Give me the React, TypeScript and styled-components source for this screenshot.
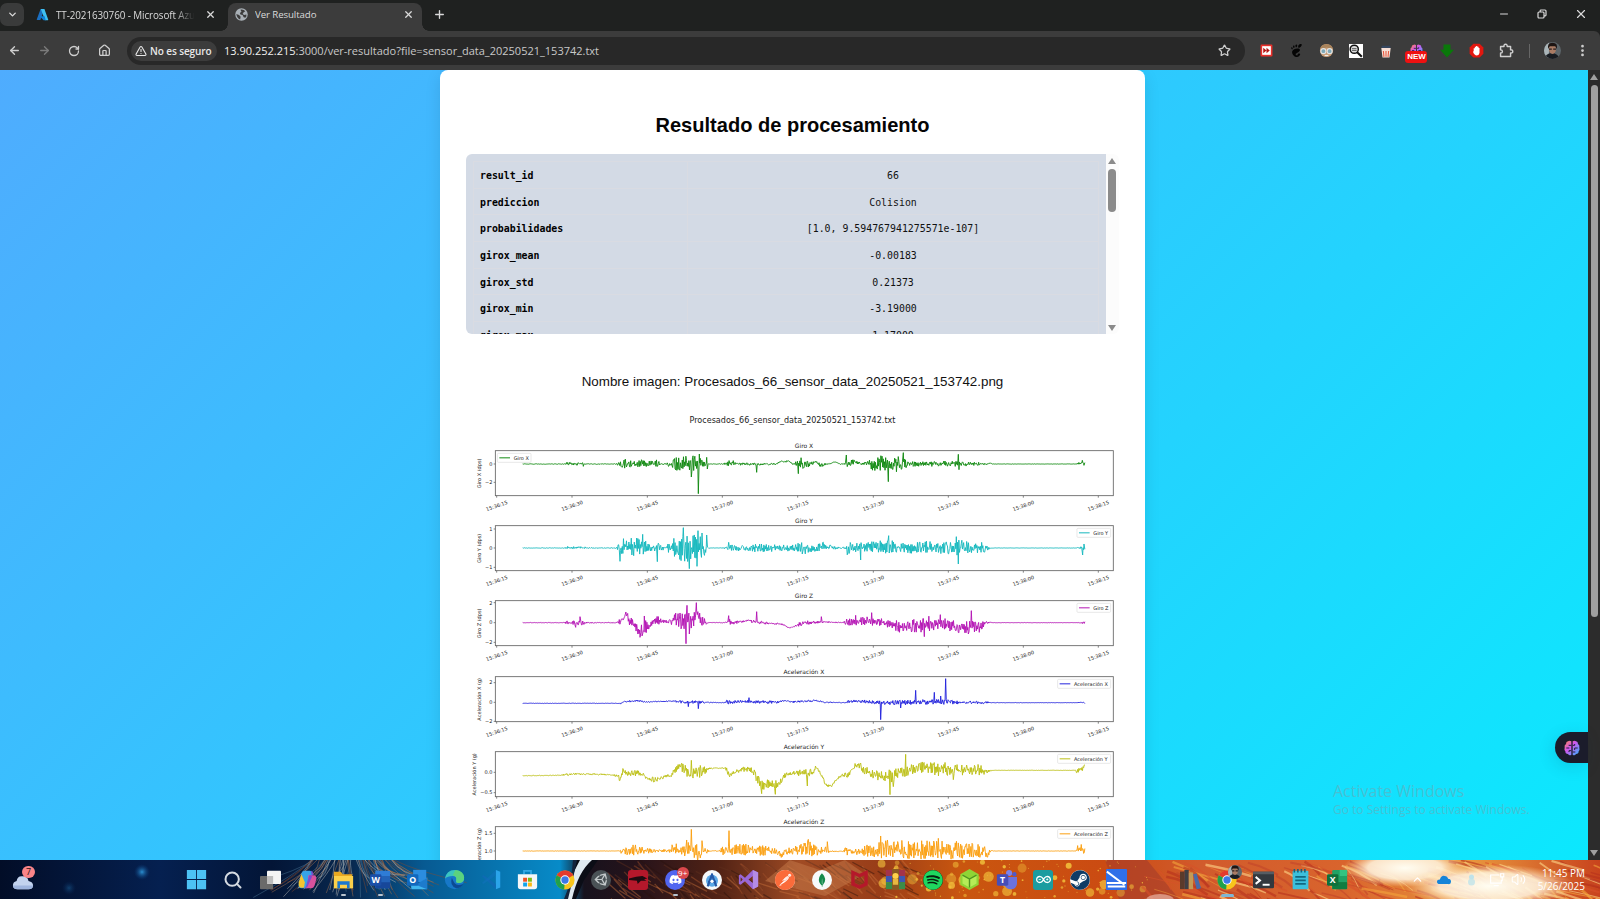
import React from 'react';
import styled, { createGlobalStyle, css } from 'styled-components';
import {
  ArrowLeft, ArrowRight, RotateCw, House, Star, X, Plus, ChevronDown, ChevronUp,
  TriangleAlert, Minus, EllipsisVertical, Volume2, Search,
} from 'lucide-react';
import { FaDiscord, FaSpotify, FaSteam, FaUnity } from 'react-icons/fa';
import { SiPostman, SiMongodb, SiArduino, SiMcafee, SiGnome } from 'react-icons/si';

const ui = `'Open Sans', 'Noto Sans', sans-serif`;
const arial = `'Liberation Sans', Arial, sans-serif`;
const mono = `'DejaVu Sans Mono', monospace`;

const GlobalStyle = createGlobalStyle`
  * { box-sizing: border-box; }
  html, body { margin: 0; padding: 0; overflow: hidden; background: #1f2020; }
`;

const Screen = styled.div`
  width: 1600px;
  height: 899px;
  display: flex;
  flex-direction: column;
  overflow: hidden;
  position: relative;
  font-family: ${ui};
`;

/* ---------- browser chrome ---------- */

const TabStrip = styled.div`
  height: 31px;
  flex: none;
  display: flex;
  align-items: flex-start;
  background: #1f2120;
  color: #dadada;
`;

const TabSearch = styled.div`
  width: 24px;
  height: 23px;
  margin-top: 3px;
  border-radius: 7px;
  background: #3a3b3b;
  display: flex;
  align-items: center;
  justify-content: center;
`;

const Tab = styled.div<{ $active?: boolean }>`
  position: relative;
  width: ${(p) => (p.$active ? 194 : 200)}px;
  height: 28px;
  margin: 3px 0 0 ${(p) => (p.$active ? 4 : 0)}px;
  padding: 0 8px 5px ${(p) => (p.$active ? 7 : 12)}px;
  display: flex;
  align-items: center;
  gap: 7px;
  border-radius: 8px 8px 0 0;
  ${(p) =>
    p.$active &&
    css`
      background: #3c3c3c;
      &::before,
      &::after {
        content: '';
        position: absolute;
        bottom: 0;
        width: 7px;
        height: 7px;
      }
      &::before {
        left: -7px;
        background: radial-gradient(circle at 0 0, transparent 6.5px, #3c3c3c 7px);
      }
      &::after {
        right: -7px;
        background: radial-gradient(circle at 100% 0, transparent 6.5px, #3c3c3c 7px);
      }
    `}
`;

const TabTitle = styled.span<{ $fade?: boolean }>`
  flex: 1;
  overflow: hidden;
  white-space: nowrap;
  font-size: ${(p) => (p.$fade ? 9.9 : 9.7)}px;
  line-height: 16px;
  letter-spacing: -0.1px;
  ${(p) =>
    p.$fade &&
    css`
      margin-right: 2px;
      mask-image: linear-gradient(90deg, #000 84%, transparent 99%);
    `}
`;

const NewTab = styled.div`
  height: 28px;
  width: 34px;
  display: flex;
  align-items: center;
  justify-content: center;
`;

const WindowButtons = styled.div`
  margin-left: auto;
  display: flex;
  height: 28px;
  align-items: center;
  > span {
    width: 38.4px;
    display: flex;
    justify-content: center;
  }
`;

const Toolbar = styled.div`
  height: 39px;
  flex: none;
  display: flex;
  align-items: center;
  background: #3c3c3c;
  border-radius: 0 6px 0 0;
  color: #cfcfcf;
`;

const NavButton = styled.div<{ $dim?: boolean }>`
  width: 30px;
  display: flex;
  justify-content: center;
  color: ${(p) => (p.$dim ? '#7c7c7c' : '#cfcfcf')};
  &:first-child { width: 29px; }
`;

const Omnibox = styled.div`
  width: 1118px;
  height: 28px;
  margin-left: 8px;
  padding: 0 14px 0 4px;
  display: flex;
  align-items: center;
  border-radius: 14px;
  background: #282828;
`;

const SecurityChip = styled.div`
  height: 20px;
  width: 86px;
  padding-left: 4px;
  display: flex;
  align-items: center;
  gap: 3px;
  border-radius: 10px;
  background: #3c3c3c;
  color: #e8e8e8;
  font-size: 10px;
  font-weight: 600;
  letter-spacing: -0.1px;
  white-space: nowrap;
`;

const Url = styled.span`
  flex: 1;
  margin-left: 7px;
  font-size: 11px;
  color: #c9c9c9;
  white-space: nowrap;
  b { font-weight: 400; color: #f1f1f1; }
`;

const Extensions = styled.div`
  display: flex;
  align-items: center;
  margin-left: 6px;
`;

const ExtSlot = styled.div`
  position: relative;
  width: 30.1px;
  height: 24px;
  display: flex;
  align-items: center;
  justify-content: center;
`;

const NewBadge = styled.span`
  position: absolute;
  left: 4px;
  top: 12px;
  width: 22px;
  height: 12px;
  border-radius: 3px;
  background: #ee1111;
  color: #fff;
  font: bold 8px/12px ${arial};
  text-align: center;
`;

const Divider = styled.div`
  width: 1px;
  height: 14px;
  margin-left: 7px;
  background: #666;
`;

const AvatarSlot = styled.div`
  margin: 0 14px 0 14px;
  display: flex;
`;

/* ---------- page ---------- */

const Viewport = styled.div`
  height: 790px;
  flex: none;
  display: flex;
`;

const Page = styled.main`
  width: 1588px;
  height: 790px;
  overflow: hidden;
  background: linear-gradient(135deg, #4facfe 0%, #00f2fe 100%) 0 0 / 1588px 1180px no-repeat;
`;

const Card = styled.section`
  width: 705px;
  height: 900px;
  margin-left: 440px;
  padding: 0 26px;
  background: #fff;
  border-radius: 8px;
  box-shadow: 0 5px 16px rgba(0, 0, 0, 0.1);
`;

const Heading = styled.h1`
  margin: 0;
  padding-top: 42px;
  height: 84px;
  font: bold 20.06px/26px ${arial};
  text-align: center;
  color: #050505;
  white-space: nowrap;
`;

const DataPanel = styled.div`
  display: flex;
  width: 653px;
  height: 180px;
  overflow: hidden;
  border-radius: 6px;
`;

const DataScroll = styled.div`
  width: 640px;
  height: 180px;
  overflow: hidden;
  padding: 7px 7px;
  background: #d3dae5;
`;

const DataTable = styled.table`
  width: 626px;
  border-collapse: collapse;
  font: 9.88px/14px ${mono};
  color: #111;
`;

const DataRow = styled.tr`
  height: 26.7px;
  th, td { border: 1px solid #d9dbe2; padding: 4px 6px 2px; }
  th { width: 214px; text-align: left; font-weight: bold; color: #000; }
  td { text-align: center; }
`;

const ScrollTrack = styled.div<{ $dark?: boolean }>`
  width: ${(p) => (p.$dark ? 12 : 13)}px;
  height: 100%;
  flex: none;
  padding: ${(p) => (p.$dark ? '4px 0' : '4px 1px 3px 0')};
  display: flex;
  flex-direction: column;
  align-items: center;
  background: ${(p) => (p.$dark ? '#2c2c2c' : '#fcfcfc')};
`;

const Arrow = styled.i<{ $down?: boolean; $dark?: boolean }>`
  width: 8px;
  height: 6px;
  background: ${(p) => (p.$dark ? '#a0a0a0' : '#8b8b8b')};
  clip-path: ${(p) => (p.$down ? 'polygon(0 0, 100% 0, 50% 100%)' : 'polygon(50% 0, 100% 100%, 0 100%)')};
  margin-top: ${(p) => (p.$down ? 'auto' : '0')};
`;

const Thumb = styled.div<{ $h: number; $dark?: boolean }>`
  width: ${(p) => (p.$dark ? 7 : 8)}px;
  height: ${(p) => p.$h}px;
  margin-top: 5px;
  border-radius: 4px;
  background: ${(p) => (p.$dark ? '#9f9f9f' : '#8b8b8b')};
`;

const ImageName = styled.p`
  margin: 0;
  padding-top: 37.5px;
  height: 78px;
  font: 13.38px/20px ${arial};
  text-align: center;
  color: #111;
  white-space: nowrap;
`;

const Figure = styled.figure`
  margin: 0;
  display: flex;
  flex-direction: column;
  svg { display: block; flex: none; }
`;

const FigureTitle = styled.figcaption`
  height: 27.7px;
  font: 8.05px/17px 'DejaVu Sans', sans-serif;
  text-align: center;
  color: #1c1c1c;
`;

/* ---------- overlays ---------- */

const BrainButton = styled.div`
  position: absolute;
  left: 1555px;
  top: 732px;
  width: 33px;
  height: 31px;
  display: flex;
  align-items: center;
  justify-content: center;
  border-radius: 15.5px 0 0 15.5px;
  background: #1b1c2b;
  box-shadow: -2px 4px 16px rgba(0, 60, 90, 0.14);
`;

const Watermark = styled.div`
  position: absolute;
  left: 1333px;
  top: 780px;
  color: rgba(120, 160, 170, 0.52);
  white-space: nowrap;
  p { margin: 0; font-size: 16px; line-height: 22px; }
  small { display: block; font-size: 12px; line-height: 16px; }
`;

/* ---------- chart ---------- */

type Key = [number, number, number];
type Point = [number, number];

interface Channel {
  title: string;
  unit: string;
  color: string;
  ticks: [string, number][];
  seed: number;
  env: Key[];
  spikes: Point[];
  legendLeft?: boolean;
  labelX?: number;
}

const channels: Channel[] = [
  {
    title: 'Giro X', unit: 'dps', color: '#118a11', seed: 11, legendLeft: true,
    ticks: [['0', 40], ['−2', 95]],
    env: [[188, 40, 0.8], [315, 40, 1], [320, 39, 4], [372, 40, 4], [380, 40, 1.2], [470, 40, 1.2], [477, 40, 16], [500, 38, 14], [520, 40, 7], [540, 40, 17], [560, 40, 8], [590, 38, 12], [602, 40, 3], [622, 40, 4], [635, 38, 20], [660, 38, 24], [690, 42, 26], [705, 36, 22], [722, 36, 14], [735, 40, 6], [745, 40, 0.8], [790, 40, 1], [802, 38, 8], [818, 36, 8], [830, 40, 4], [950, 40, 3], [965, 31, 2], [975, 34, 2], [985, 30, 2], [1000, 40, 3], [1010, 40, 20], [1042, 40, 20], [1050, 40, 6], [1068, 34, 4], [1080, 44, 6], [1105, 40, 2], [1125, 34, 1.5], [1140, 40, 1], [1156, 40, 2], [1160, 36, 16], [1185, 34, 7], [1205, 40, 3], [1225, 39, 8], [1238, 40, 22], [1265, 40, 26], [1290, 40, 26], [1330, 38, 24], [1342, 40, 8], [1400, 40, 7], [1440, 40, 9], [1500, 39, 8], [1560, 40, 5], [1580, 40, 2], [1590, 37, 1], [1598, 40, 0.5], [1848, 40, 0.5], [1856, 38, 3], [1873, 38, 3]],
    spikes: [[370, 47], [694, 79], [715, 129], [718, 10], [740, 20], [742, 55], [890, 65], [1015, 69], [1159, 13], [1285, 93], [1330, 6], [1495, 11], [1497, 57], [1867, 29], [1872, 44]],
  },
  {
    title: 'Giro Y', unit: 'dps', color: '#16b8bd', seed: 23,
    ticks: [['1', 10], ['0', 67], ['−1', 125]],
    env: [[188, 67, 0.8], [315, 67, 1], [320, 66, 4], [375, 66, 3], [380, 67, 1.5], [470, 67, 1.5], [476, 67, 15], [484, 67, 28], [500, 62, 24], [520, 65, 28], [545, 62, 28], [560, 65, 16], [575, 67, 10], [595, 67, 15], [605, 67, 6], [620, 67, 8], [635, 67, 25], [655, 64, 40], [690, 67, 42], [720, 67, 38], [738, 67, 26], [745, 67, 0.8], [790, 67, 1], [800, 65, 10], [820, 67, 9], [870, 69, 8], [885, 65, 16], [900, 67, 13], [950, 67, 10], [1005, 67, 10], [1020, 67, 18], [1045, 67, 18], [1060, 68, 12], [1090, 62, 14], [1110, 66, 8], [1145, 67, 2], [1158, 67, 3], [1162, 67, 22], [1180, 66, 12], [1200, 70, 20], [1215, 62, 16], [1240, 64, 16], [1290, 62, 22], [1340, 68, 16], [1400, 64, 18], [1470, 66, 20], [1500, 66, 24], [1530, 66, 16], [1575, 66, 16], [1590, 67, 3], [1598, 67, 0.5], [1848, 67, 0.5], [1862, 67, 4], [1874, 67, 6]],
    spikes: [[480, 107], [548, 26], [592, 108], [670, 6], [688, 129], [711, 122], [714, 15], [726, 22], [740, 28], [806, 50], [1202, 103], [1286, 30], [1489, 33], [1495, 115], [1868, 88], [1872, 55]],
  },
  {
    title: 'Giro Z', unit: 'dps', color: '#b413b4', seed: 37,
    ticks: [['2', 6], ['0', 66], ['−2', 125]],
    env: [[188, 66, 0.8], [314, 66, 0.8], [320, 66, 6], [370, 66, 7], [376, 66, 2], [470, 66, 1.2], [478, 66, 12], [488, 62, 10], [498, 40, 8], [510, 64, 18], [525, 72, 14], [535, 95, 12], [545, 90, 20], [555, 80, 24], [565, 80, 12], [580, 60, 14], [590, 55, 16], [600, 62, 9], [625, 64, 4], [645, 56, 22], [680, 62, 30], [700, 58, 24], [712, 32, 10], [725, 62, 18], [740, 66, 8], [746, 66, 0.8], [795, 66, 1], [806, 64, 10], [830, 66, 5], [865, 60, 4], [885, 64, 5], [920, 67, 4], [955, 69, 3], [970, 72, 2], [985, 81, 1.5], [1000, 79, 1.5], [1020, 70, 7], [1040, 66, 7], [1080, 64, 3], [1150, 66, 1.5], [1160, 66, 12], [1185, 62, 12], [1230, 60, 14], [1270, 66, 14], [1300, 75, 18], [1340, 80, 18], [1390, 70, 26], [1440, 68, 20], [1500, 80, 18], [1565, 76, 20], [1575, 66, 7], [1590, 65, 1], [1600, 66, 0.5], [1855, 66, 0.5], [1862, 67, 3], [1874, 66, 3]],
    spikes: [[347, 80], [360, 48], [540, 110], [553, 46], [660, 37], [678, 129], [681, 14], [688, 100], [709, 6], [806, 45], [890, 33], [1084, 48], [1187, 44], [1235, 36], [1393, 108], [1441, 42], [1525, 100], [1534, 30]],
  },
  {
    title: 'Aceleración X', unit: 'g', color: '#2424dd', seed: 41,
    ticks: [['2', 18], ['0', 77], ['−2', 134]],
    env: [[188, 80, 0.6], [475, 80, 0.6], [480, 79, 4], [500, 75, 3], [535, 72, 3], [560, 76, 2], [640, 73, 2], [670, 77, 5], [715, 76, 5], [740, 77, 2], [790, 78, 0.8], [800, 76, 6], [860, 75, 4], [900, 76, 5], [950, 76, 4], [975, 72, 2.5], [1000, 76, 3], [1060, 72, 3], [1100, 77, 2], [1155, 78, 0.8], [1165, 75, 4], [1200, 73, 5], [1240, 77, 5], [1300, 78, 7], [1330, 78, 8], [1370, 76, 8], [1420, 76, 8], [1460, 76, 8], [1500, 77, 5], [1580, 78, 4], [1592, 78, 0.6], [1850, 78, 0.5], [1855, 78, 2], [1873, 78, 3]],
    spikes: [[685, 90], [715, 96], [867, 63], [1262, 129], [1322, 94], [1367, 41], [1423, 47], [1442, 58], [1457, 6]],
  },
  {
    title: 'Aceleración Y', unit: 'g', color: '#bcbf16', seed: 53, labelX: 42,
    ticks: [['0.0', 62], ['−0.5', 123]],
    env: [[188, 72, 0.8], [300, 71, 1], [320, 69, 4], [350, 67, 3], [390, 67, 2.5], [460, 70, 1.5], [475, 74, 6], [480, 88, 8], [488, 55, 14], [500, 66, 8], [540, 65, 12], [560, 80, 9], [590, 86, 8], [605, 78, 4], [630, 72, 6], [645, 55, 12], [662, 42, 14], [680, 60, 16], [700, 65, 20], [720, 60, 20], [740, 55, 8], [746, 50, 2], [790, 49, 2], [800, 55, 8], [810, 72, 6], [825, 60, 5], [865, 50, 9], [880, 62, 12], [895, 85, 16], [910, 100, 16], [945, 98, 18], [960, 92, 9], [975, 72, 8], [1000, 64, 6], [1040, 65, 15], [1060, 62, 8], [1068, 45, 6], [1085, 70, 6], [1095, 96, 6], [1105, 106, 9], [1120, 96, 5], [1140, 74, 3], [1160, 70, 10], [1180, 52, 7], [1190, 38, 13], [1205, 50, 12], [1240, 72, 15], [1290, 75, 24], [1320, 64, 15], [1345, 55, 18], [1400, 46, 18], [1440, 52, 22], [1500, 56, 17], [1560, 54, 17], [1575, 60, 9], [1590, 57, 3], [1598, 56, 0.5], [1846, 56, 0.5], [1851, 58, 8], [1873, 46, 8]],
    spikes: [[694, 26], [905, 126], [946, 128], [1042, 103], [1202, 34], [1290, 129], [1300, 105], [1337, 8], [1480, 84]],
  },
  {
    title: 'Aceleración Z', unit: 'g', color: '#fb9f10', seed: 67,
    ticks: [['1.5', 20], ['1.0', 73], ['0.5', 125]],
    env: [[188, 73, 0.5], [475, 73, 0.6], [482, 73, 8], [495, 68, 18], [530, 70, 16], [560, 72, 9], [600, 73, 4], [625, 72, 5], [640, 66, 17], [670, 70, 18], [690, 65, 24], [715, 75, 24], [740, 74, 7], [750, 73, 1], [780, 73, 2], [790, 70, 18], [830, 68, 18], [900, 72, 17], [950, 73, 15], [965, 88, 7], [975, 74, 8], [1010, 72, 15], [1045, 65, 26], [1070, 73, 13], [1095, 73, 15], [1110, 74, 2], [1150, 74, 1.5], [1160, 66, 20], [1180, 75, 7], [1240, 72, 24], [1280, 68, 30], [1400, 70, 28], [1500, 70, 28], [1570, 74, 18], [1585, 85, 15], [1592, 72, 2], [1600, 73, 0.5], [1848, 73, 0.5], [1853, 68, 14], [1872, 68, 18]],
    spikes: [[680, 40], [694, 8], [713, 105], [726, 42], [807, 12], [1045, 38], [1102, 45], [1262, 28], [1435, 35]],
  },
];

const timeTicks: [string, number][] = [
  ['15:36:15', 110], ['15:36:30', 336], ['15:36:45', 562], ['15:37:00', 787], ['15:37:15', 1013],
  ['15:37:30', 1240], ['15:37:45', 1465], ['15:38:00', 1690], ['15:38:15', 1915],
];

function random(seed: number) {
  let s = seed;
  return () => {
    s = (s * 1664525 + 1013904223) % 4294967296;
    return s / 4294967296;
  };
}

const STEP = 1.8;

function trace({ env, spikes, seed }: Channel) {
  const rnd = random(seed * 7919);
  const pts: Point[] = [];
  let k = 0;
  let sign = 1;
  for (let x = 188; x <= 1875; x += STEP) {
    while (k < env.length - 2 && x > env[k + 1][0]) k++;
    const a = env[k];
    const b = env[k + 1];
    const t = Math.min(1, (x - a[0]) / (b[0] - a[0]));
    const mid = a[1] + (b[1] - a[1]) * t;
    const amp = a[2] + (b[2] - a[2]) * t;
    if (rnd() > 0.28) sign = -sign;
    const mag = Math.pow(rnd(), 1.05);
    pts.push([x, mid + sign * mag * amp]);
  }
  for (const [x, y] of spikes) {
    const i = Math.round((x - 188) / STEP);
    if (pts[i]) pts[i] = [x, y];
  }
  return pts.map(([x, y]) => `${x.toFixed(1)},${y.toFixed(1)}`).join(' ');
}

const Plot = ({ channel }: { channel: Channel }) => {
  const { title, unit, color, ticks, legendLeft, labelX = 57 } = channel;
  const wide = title.length > 8;
  const lx = legendLeft ? 112 : wide ? 1793 : 1851;
  const lw = wide ? 159 : 101;
  return (
    <svg width="653" height="75.333" viewBox="18 0 1959 226" fontFamily="DejaVu Sans, sans-serif" fontSize="15" fill="#222">
      <text x="1032" y="24" fontSize="18" textAnchor="middle">{title}</text>
      <g transform="translate(0 32)">
        <text transform={`translate(${labelX} 68) rotate(-90)`} textAnchor="middle" dominantBaseline="central">
          {`${title} (${unit})`}
        </text>
        {ticks.map(([label, y]) => (
          <g key={label}>
            <line x1="101" x2="106" y1={y} y2={y} stroke="#444" strokeWidth="2" />
            <text x="97" y={y + 5.5} textAnchor="end">{label}</text>
          </g>
        ))}
        {timeTicks.map(([label, x]) => (
          <g key={label}>
            <line x1={x} x2={x} y1="135" y2="141" stroke="#444" strokeWidth="2" />
            <text transform={`translate(${x} 165) rotate(-20)`} textAnchor="middle" dominantBaseline="central">{label}</text>
          </g>
        ))}
        <polyline points={trace(channel)} fill="none" stroke={color} strokeWidth="2.8" strokeLinejoin="round" />
        <rect x="106" y="0" width="1854" height="135" fill="none" stroke="#666" strokeWidth="2.6" />
        <rect x={lx} y="8" width={lw} height="27" rx="3" fill="#fff" fillOpacity="0.85" stroke="#ddd" strokeWidth="2" />
        <line x1={lx + 6} x2={lx + 38} y1="21.5" y2="21.5" stroke={color} strokeWidth="3" />
        <text x={lx + 49} y="27">{title}</text>
      </g>
    </svg>
  );
};

/* ---------- small drawings ---------- */

const AzureLogo = () => (
  <svg width="13" height="13" viewBox="0 0 24 24">
    <path d="M8.500 2h7L8 22H2.500a1 1 0 0 1-1-1.400z" fill="#1b6fc0" />
    <path d="M9 2h6.500l7 19a1 1 0 0 1-1 1.400h-5z" fill="#3fc0f2" />
    <path d="M7 15h9l2 7.400-4 0z" fill="#0f80d8" />
  </svg>
);

const GlobeIcon = () => (
  <svg width="13" height="13" viewBox="0 0 24 24">
    <circle cx="12" cy="12" r="11.500" fill="#a9b0b6" />
    <path d="M10 3q6-1 9 3l-3 2-2 3 3 2 4-1q1 4-2 6l-3-1-2-4-4-1-1-3 3-2zM2.500 11l5 2 3 3-1 5q-6-2-7-10z" fill="#3c3c3c" />
  </svg>
);

const RestoreIcon = () => (
  <svg width="10" height="10" viewBox="0 0 10 10" fill="none" stroke="#dadada" strokeWidth="1.200">
    <rect x="1" y="3" width="6" height="6" rx="1" />
    <path d="M3.200 3V1.800q0-.8.8-.8h4q1 0 1 1v4q0 .8-.8.8H7" />
  </svg>
);

const PuzzleIcon = () => (
  <svg width="15" height="15" viewBox="0 0 24 24" fill="none" stroke="#cfcfcf" strokeWidth="2.300" strokeLinejoin="round">
    <path d="M2.500 5.500H8q-.5-3.500 2.500-3.500T13 5.500h5.500V11q3.500-.5 3.500 2.500T18.500 16v5.500h-16V16q3 0 3-2.500T2.500 11z" />
  </svg>
);

const Photo = ({ size = 17 }: { size?: number }) => (
  <svg width={size} height={size} viewBox="0 0 24 24">
    <defs><clipPath id={`ph${size}`}><circle cx="12" cy="12" r="12" /></clipPath></defs>
    <g clipPath={`url(#ph${size})`}>
      <rect width="24" height="24" fill="#5d666b" />
      <rect width="7" height="24" fill="#a9b4b8" />
      <path d="M1 24q1-8 10-8t11 8z" fill="#181c22" />
      <ellipse cx="12" cy="10" rx="5" ry="7" fill="#a97b64" />
      <path d="M6 10q-2-9 6-9t6 9l-2-4H8z" fill="#1d1513" />
      <path d="M7 9h4v2H7zM13 9h4v2h-4z" fill="#2a2020" />
    </g>
  </svg>
);

const GradientBrain = ({ size }: { size: number }) => (
  <svg width={size} height={size} viewBox="0 0 24 24">
    <defs>
      <linearGradient id={`brain${size}`} x1="0" y1="0" x2="1" y2="1">
        <stop offset="0" stopColor="#ff8a4c" />
        <stop offset="0.4" stopColor="#d355ee" />
        <stop offset="1" stopColor="#2fb4ff" />
      </linearGradient>
    </defs>
    <path
      d="M11 2q-3-2-5 0Q3 2 3 6q-3 2-2 5-1 4 1 6 0 4 4 4 2 3 5 1zM13 2q3-2 5 0 3 0 3 4 3 2 2 5 1 4-1 6 0 4-4 4-2 3-5 1z"
      fill={`url(#brain${size})`}
    />
    <path d="M11 8H7M3.500 12H8M11 16H7.500V18M13 8h3V6M20.500 12H16v3M13 18h4" fill="none" stroke="#23203a" strokeWidth="1.500" />
  </svg>
);

const extensions: React.ReactNode[] = [
  <svg key="ff" width="13" height="13" viewBox="0 0 24 24">
    <rect x="1" y="1" width="22" height="22" rx="2" fill="#e9302b" /><rect x="4" y="4" width="16" height="16" fill="#fff" />
    <path d="M6 7l6 5-6 5zM12 7l6 5-6 5z" fill="#b51512" />
  </svg>,
  <SiGnome key="gn" size={13} color="#050505" />,
  <svg key="face" width="15" height="15" viewBox="0 0 24 24">
    <circle cx="12" cy="12" r="10.500" fill="#c79a72" /><path d="M2 10q1-8 10-8t10 8l-10-3z" fill="#a9845c" />
    <circle cx="7" cy="13" r="4" fill="#7fa9b8" stroke="#e4e4e4" strokeWidth="1.800" />
    <circle cx="17" cy="13" r="4" fill="#7fa9b8" stroke="#e4e4e4" strokeWidth="1.800" />
    <path d="M9 20h6" stroke="#eee" strokeWidth="2" />
  </svg>,
  <svg key="mag" width="14" height="14" viewBox="0 0 24 24">
    <rect width="24" height="24" fill="#fff" /><circle cx="9" cy="9" r="7" fill="#ddd" stroke="#111" strokeWidth="2.500" />
    <path d="M14 14l8 8" stroke="#111" strokeWidth="3.500" /><path d="M5 8h8M5 11h8" stroke="#333" strokeWidth="1.300" />
  </svg>,
  <svg key="pop" width="12" height="14" viewBox="0 0 20 24">
    <path d="M3 3h14l1 5H2z" fill="#35465e" /><path d="M2 7h16l-2 16H4z" fill="#f7dfd5" />
    <path d="M5.500 12l1 10M10 12v10M14.500 12l-1 10" stroke="#e5583f" strokeWidth="1.800" />
  </svg>,
  <React.Fragment key="new"><GradientBrain size={13} /><NewBadge>NEW</NewBadge></React.Fragment>,
  <svg key="down" width="14" height="14" viewBox="0 0 24 24">
    <path d="M6 1h12v9h6L12 23 0 10h6z" fill="#0a780a" />
  </svg>,
  <svg key="ad" width="15" height="15" viewBox="0 0 24 24">
    <path d="M7 1h10l6 6v10l-6 6H7l-6-6V7z" fill="#e2170f" />
    <path d="M7.500 13V8.500h1.800V6h2V4.800h2V6h2v2h1.500v8q-1 4-4.500 4t-6-6z" fill="#fff" />
  </svg>,
  <PuzzleIcon key="puz" />,
];

const ChromeLogo = () => (
  <svg width="20" height="20" viewBox="0 0 24 24">
    <circle cx="12" cy="12" r="11.500" fill="#f8c51c" />
    <path d="M12 12L2 6.300A11.500 11.500 0 0 1 22 6.300z" fill="#e33b2e" />
    <path d="M12 12L2 6.300A11.500 11.500 0 0 0 11 23.500z" fill="#20a04b" />
    <circle cx="12" cy="12" r="5.600" fill="#fff" /><circle cx="12" cy="12" r="4.400" fill="#3b78e7" />
  </svg>
);

interface DiscProps { $bg: string; $round?: boolean; $fg?: string; }
const IconDisc = styled.span<DiscProps>`
  width: 20px;
  height: 20px;
  display: flex;
  align-items: center;
  justify-content: center;
  border-radius: ${(p) => (p.$round ? '50%' : '3px')};
  background: ${(p) => p.$bg};
  color: ${(p) => p.$fg || '#fff'};
`;

const S = ({ children }: { children: React.ReactNode }) => (
  <svg width="21" height="21" viewBox="0 0 24 24">{children}</svg>
);

const letter = { fontFamily: 'Open Sans, sans-serif', fontWeight: 700, fill: '#fff', textAnchor: 'middle' as const };

interface TaskApp { id: string; icon: React.ReactNode; running?: boolean; badge?: string; }

const apps: TaskApp[] = [
  { id: 'start', icon: <S><path d="M1 1h10.500v10.500H1zM12.500 1H23v10.500H12.500zM1 12.500h10.500V23H1zM12.500 12.500H23V23H12.500z" fill="#4cc2f4" /></S> },
  { id: 'search', icon: <Search size={20} color="#d5dbe2" strokeWidth={2.4} /> },
  { id: 'tasks', icon: <S><rect x="0" y="8" width="15" height="15" rx="1" fill="#6a6a6a" /><rect x="8" y="2" width="16" height="15" rx="1" fill="#f4f4f4" /><rect x="8" y="8" width="7" height="9" fill="#bdbdbd" /></S> },
  { id: 'copilot', icon: <S><path d="M8 2h7q2 0 2.500 3L15 18q-1 4-4 4H5q-4 0-3-5L5 5q1-3 3-3z" fill="#36a3e8" /><path d="M2 15l3-9 4 9-1 6q-7 2-6-6z" fill="#f4c430" /><path d="M13 7h5q5 0 4 5l-2 7q-1 3-4 3H9q2 0 3-5z" fill="#d7529d" /><path d="M16 2q2 0 3 5h-5L11 17q-1 5-4 5 5 0 6-4l4-9z" fill="#7d4bd0" /></S> },
  { id: 'explorer', running: true, icon: <S><path d="M1 3h8l2 3h11v16H1z" fill="#e9a820" /><path d="M1 8h22v14H1z" fill="#fcd04b" /><path d="M5 14h14v8h-3v-4H8v4H5z" fill="#1b78d0" /></S> },
  { id: 'word', running: true, icon: <S><rect x="6" y="2" width="17" height="20" rx="1.500" fill="#2f7cd6" /><rect x="6" y="8" width="17" height="7" fill="#2362b8" /><rect x="6" y="15" width="17" height="7" fill="#17479a" /><rect x="0" y="6" width="13" height="13" rx="1.500" fill="#1b4fa8" /><text x="6.500" y="16" fontSize="10" {...letter}>W</text></S> },
  { id: 'outlook', icon: <S><rect x="7" y="1" width="15" height="14" fill="#2b8ddf" /><path d="M4 11l9 6 10-7v13H5z" fill="#3fb6ef" /><path d="M23 10v13L10 18z" fill="#1d7bcc" /><rect x="0" y="6" width="13" height="13" rx="1.500" fill="#1168bd" /><text x="6.500" y="16" fontSize="10" {...letter}>O</text></S> },
  { id: 'edge', icon: <S><circle cx="12" cy="12" r="11" fill="#1778c8" /><path d="M1 11Q3 1 12 1t11 9q0 6-6 6-4 0-3-3 1-5-4-5-6 0-9 3z" fill="#3ac5c0" /><path d="M13 1q10 1 10 9 0 5-5 6-5 0-4-3 1-5-4-6z" fill="#5bd27f" /><path d="M9 10q-3 9 5 12 5 0 8-5-7 3-10-1-2-3-3-6z" fill="#0c4a94" /></S> },
  { id: 'code', icon: <S><path d="M17 1l5 2v18l-5 2z" fill="#2aa4ea" /><path d="M1 8l2-1 14 10v6z" fill="#0f6bb4" /><path d="M1 16l2 1L17 7V1z" fill="#1272bd" fillOpacity=".5" /></S> },
  { id: 'store', icon: <S><path d="M8 6V2h8v4" fill="none" stroke="#35a9e6" strokeWidth="2" /><path d="M1 6h22v14q0 3-3 3H4q-3 0-3-3z" fill="#f5f6f8" /><path d="M7 10h4.500v4.500H7z" fill="#f05023" /><path d="M12.500 10H17v4.500h-4.500z" fill="#7db912" /><path d="M7 15.500h4.500V20H7z" fill="#10a3ec" /><path d="M12.500 15.500H17V20h-4.500z" fill="#fcb813" /></S> },
  { id: 'chrome', icon: <ChromeLogo /> },
  { id: 'unity', icon: <IconDisc $bg="#4a5256" $round $fg="#c3c9cb"><FaUnity size={15} /></IconDisc> },
  { id: 'msi', icon: <IconDisc $bg="#b4182b"><svg width="19" height="10" viewBox="0 0 24 12"><path d="M0 4l9-2 8-1 6 3-4 1 3 2-7 0-4 4-1-4-10-1z" fill="#1d0b10" /></svg></IconDisc> },
  { id: 'discord', running: true, badge: '9+', icon: <IconDisc $bg="#5165f0" $round><FaDiscord size={13} /></IconDisc> },
  { id: 'studio', icon: <IconDisc $bg="#f5f8fa" $round><svg width="16" height="16" viewBox="0 0 24 24"><circle cx="12" cy="13" r="9" fill="#5aa7e6" /><path d="M11 2h2l7 19-3 1-5-13-5 13-3-1zM6 13h12v3H6z" fill="#2459a8" /><circle cx="12" cy="14" r="2.500" fill="#fff" /></svg></IconDisc> },
  { id: 'visual', icon: <S><path d="M17 1l6 3v16l-6 3L8 14l-5 4-2-1V7l2-1 5 4zM17 8l-5 4 5 4zM3 9.500v5L5.500 12z" fill="#9a67d6" /><path d="M17 1l6 3v16l-6 3z" fill="#b48be6" /></S> },
  { id: 'postman', icon: <IconDisc $bg="#fff" $round $fg="#fb6b3a"><SiPostman size={20} /></IconDisc> },
  { id: 'mongo', icon: <IconDisc $bg="#f7fafa" $round $fg="#148a4c"><SiMongodb size={14} /></IconDisc> },
  { id: 'mcafee', icon: <SiMcafee size={19} color="#b5182a" /> },
  { id: 'winrar', icon: <S><rect x="1" y="1" width="22" height="7" fill="#a3334b" /><rect x="1" y="8" width="22" height="7" fill="#3c58b4" /><rect x="1" y="15" width="22" height="8" fill="#3c8c48" /><path d="M8 0h8v24H8z" fill="#8a5a22" /><circle cx="12" cy="8" r="3.500" fill="#ffd24a" /><rect x="9" y="11" width="6" height="7" fill="#e8b840" /></S> },
  { id: 'spotify', icon: <IconDisc $bg="#07220f" $round $fg="#1fd760"><FaSpotify size={20} /></IconDisc> },
  { id: 'box', icon: <S><path d="M12 0l10.500 6v12L12 24 1.500 18V6z" fill="#8fd436" /><path d="M4 7l8 4.500V21l-8-4.500zM20 7l-8 4.500V21l8-4.500z" fill="#b6ec57" /><path d="M4 7l8 4.500L20 7M12 11.500V21" stroke="#4f9420" strokeWidth="1.600" fill="none" /></S> },
  { id: 'teams', icon: <S><circle cx="15" cy="4.500" r="3.500" fill="#7b83eb" /><circle cx="21" cy="6" r="2.500" fill="#5059c9" /><path d="M9 9h15v8q-1 6-7 6t-8-6z" fill="#6a72dc" /><rect x="1" y="6" width="13" height="13" rx="1.500" fill="#464eb8" /><text x="7.500" y="16" fontSize="10" {...letter}>T</text></S> },
  { id: 'arduino', icon: <IconDisc $bg="#1b9ca0"><SiArduino size={15} /></IconDisc> },
  { id: 'steam', icon: <IconDisc $bg="#fff" $round $fg="#0f3c66"><FaSteam size={20} /></IconDisc> },
  { id: 'drive', icon: <S><rect width="24" height="24" rx="1" fill="#2f6fe8" /><path d="M1 3l20 15M1 16h22M2 20h20" stroke="#fff" strokeWidth="2.200" /></S> },
  { id: 'gap', icon: null },
  { id: 'books', icon: <S><rect x="0" y="3" width="5" height="20" fill="#5b3a2a" /><rect x="5" y="1" width="5" height="22" fill="#3f3f45" /><rect x="10" y="4" width="5" height="19" fill="#c59a54" /><path d="M15 6l4-1 5 17-5 1z" fill="#4a6ba8" /></S> },
  { id: 'chrome-profile', icon: <ChromeLogo /> },
  { id: 'terminal', icon: <S><rect y="3" width="24" height="19" rx="1.500" fill="#33383e" /><rect y="3" width="24" height="3" fill="#565c63" /><path d="M3 9l5 4-5 4" fill="none" stroke="#fff" strokeWidth="2.200" /><path d="M11 18h8" stroke="#fff" strokeWidth="2.200" /></S> },
  { id: 'notes', icon: <S><rect x="3" y="2" width="18" height="21" rx="1" fill="#3cc0dd" /><path d="M5 0v4M9 0v4M13 0v4M17 0v4" stroke="#1b5e78" strokeWidth="1.800" /><path d="M6 9h12M6 13h12M6 17h12" stroke="#126882" strokeWidth="1.800" /></S> },
  { id: 'excel', icon: <S><rect x="6" y="1" width="17" height="22" rx="1.500" fill="#21a366" /><rect x="14.500" y="1" width="8.500" height="7" fill="#33c481" /><rect x="6" y="15" width="17" height="8" fill="#107c41" /><rect x="0" y="6" width="13" height="13" rx="1.500" fill="#0f703b" /><text x="6.500" y="16" fontSize="10" {...letter}>X</text></S> },
];

/* ---------- taskbar ---------- */

const Taskbar = styled.footer`
  position: relative;
  isolation: isolate;
  height: 39px;
  flex: none;
  display: flex;
  align-items: center;
  background: #03122d;
  overflow: hidden;
`;

const WallpaperSvg = styled.svg`
  position: absolute;
  inset: 0;
  z-index: -1;
`;

const Weather = styled.div`
  position: relative;
  width: 178.3px;
  padding-left: 12px;
  display: flex;
`;

const Badge = styled.span<{ $x: number; $y: number; $w?: number }>`
  position: absolute;
  left: ${(p) => p.$x}px;
  top: ${(p) => p.$y}px;
  width: ${(p) => p.$w || 13}px;
  height: 12px;
  border-radius: 6px;
  background: ${(p) => (p.$w ? '#d9484c' : '#f98488')};
  color: ${(p) => (p.$w ? '#fff' : '#2a1014')};
  font: ${(p) => (p.$w ? 8 : 9)}px/12px ${ui};
  text-align: center;
`;

const AppSlot = styled.div<{ $running?: boolean }>`
  position: relative;
  width: 36.8px;
  height: 39px;
  flex: none;
  display: flex;
  align-items: center;
  justify-content: center;
  svg { display: block; }
  ${(p) =>
    p.$running &&
    css`
      &::after {
        content: '';
        position: absolute;
        bottom: 3px;
        left: 16px;
        width: 5px;
        height: 2px;
        border-radius: 1px;
        background: #b9c4cf;
      }
    `}
`;

const ProfilePin = styled.div`
  position: absolute;
  left: 19px;
  top: 5px;
`;

const ActiveMark = styled.div`
  position: absolute;
  left: 12px;
  bottom: 2px;
  width: 13px;
  height: 3px;
  border-radius: 2px;
  background: #7fb7d2;
`;

const Tray = styled.div`
  margin-left: auto;
  padding-right: 15px;
  display: flex;
  align-items: center;
  color: #fff;
`;

const TrayItem = styled.div<{ $w: number }>`
  width: ${(p) => p.$w}px;
  display: flex;
  justify-content: center;
`;

const Clock = styled.div`
  width: 59px;
  padding-top: 1px;
  text-align: right;
  font-size: 10px;
  line-height: 13.5px;
  white-space: nowrap;
`;

const Wallpaper = () => {
  const r = random(2025);
  const hair = Array.from({ length: 75 }, () => {
    const x = 310 + r() * 85;
    const dx = (x - 350) * (0.5 + r()) + (r() - 0.5) * 20;
    return { d: `M${x} 0q${dx * 0.3} ${10 + r() * 8} ${dx} ${14 + r() * 24}`, c: ['#b07a50', '#c4bfb8', '#4c7898', '#8a4a2c'][Math.floor(r() * 4)] };
  });
  const streaks = Array.from({ length: 190 }, () => {
    const x = 1140 + r() * 460;
    const y = r() * 40;
    const l = 12 + r() * 40;
    return { d: `M${x} ${y}q${l / 2} ${3 + r() * 4} ${l} ${8 + r() * 12}`, c: ['#b5301c', '#f4a53c', '#ffd98a', '#d8502a', '#c2452a'][Math.floor(r() * 5)], w: 0.7 + r() * 2 };
  });
  const leather = Array.from({ length: 150 }, () => {
    const x = 600 + r() * 310;
    const y = r() * 40;
    return { d: `M${x} ${y}l${8 + r() * 18} ${5 + r() * 14}`, c: ['#2b120c', '#a5522c', '#60301e', '#c9713b'][Math.floor(r() * 4)] };
  });
  const sparks = Array.from({ length: 120 }, () => ({ x: 880 + r() * 270, y: r() * 39, s: 0.5 + Math.pow(r(), 4) * 5, o: 0.4 + r() * 0.5 }));
  return (
    <WallpaperSvg width="1600" height="39" viewBox="0 0 1600 39">
      <defs>
        <linearGradient id="sky" x1="0" x2="1600" y1="0" y2="0" gradientUnits="userSpaceOnUse">
          <stop offset="0" stopColor="#020d27" />
          <stop offset="0.1" stopColor="#052050" />
          <stop offset="0.17" stopColor="#031536" />
          <stop offset="0.22" stopColor="#082950" />
          <stop offset="0.265" stopColor="#075a92" />
          <stop offset="0.35" stopColor="#078bc8" />
          <stop offset="0.365" stopColor="#17121d" />
          <stop offset="0.4" stopColor="#27131a" />
          <stop offset="0.45" stopColor="#532315" />
          <stop offset="0.5" stopColor="#a04b24" />
          <stop offset="0.55" stopColor="#993d18" />
          <stop offset="0.6" stopColor="#c9560f" />
          <stop offset="0.69" stopColor="#cb4b12" />
          <stop offset="0.75" stopColor="#d15b2c" />
          <stop offset="0.84" stopColor="#d9642d" />
          <stop offset="0.92" stopColor="#e8963e" />
          <stop offset="1" stopColor="#c8431d" />
        </linearGradient>
        <radialGradient id="glow"><stop offset="0" stopColor="#fffdf2" /><stop offset="0.6" stopColor="#fff3dc" stopOpacity="0.88" /><stop offset="1" stopColor="#ffd9a0" stopOpacity="0" /></radialGradient>
        <radialGradient id="star"><stop offset="0" stopColor="#2b8fd0" /><stop offset="1" stopColor="#0a3a78" stopOpacity="0" /></radialGradient>
      </defs>
      <rect width="1600" height="39" fill="url(#sky)" />
      <circle cx="142" cy="12" r="8" fill="url(#star)" />
      <circle cx="69" cy="28" r="7" fill="url(#star)" opacity="0.35" />
      {hair.map((h, i) => <path key={i} d={h.d} stroke={h.c} strokeWidth="0.7" fill="none" opacity="0.65" />)}
      {leather.map((h, i) => <path key={i} d={h.d} stroke={h.c} strokeWidth="1.3" opacity="0.45" />)}
      <path d="M790 0l30 10 25-10 20 14-40 22-60-15z" fill="#c67a4a" opacity="0.5" />
      <path d="M574 0h24l-14 20-8 19h-10q8-20 8-39z" fill="#0b0d16" />
      <path d="M580 0h12q-14 12-20 39h-5q2-20 13-39z" fill="#dfe9f0" />
      <path d="M573 0h4q-4 20-9 39h-4q8-18 9-39z" fill="#13233c" />
      <path d="M1105 0h42l32 39h-60z" fill="#a53c2c" opacity="0.6" />
      {sparks.map((s, i) => <circle key={i} cx={s.x} cy={s.y} r={s.s} fill="#f3c33c" opacity={s.o} />)}
      {streaks.map((h, i) => <path key={i} d={h.d} stroke={h.c} strokeWidth={h.w} fill="none" opacity="0.6" />)}
      <ellipse cx="1405" cy="8" rx="62" ry="19" fill="url(#glow)" />
      <ellipse cx="1490" cy="26" rx="85" ry="22" fill="url(#glow)" />
      <ellipse cx="1160" cy="40" rx="14" ry="6" fill="#e8b4a4" opacity="0.7" />
    </WallpaperSvg>
  );
};

const rows: [string, string][] = [
  ['result_id', '66'],
  ['prediccion', 'Colision'],
  ['probabilidades', '[1.0, 9.594767941275571e-107]'],
  ['girox_mean', '-0.00183'],
  ['girox_std', '0.21373'],
  ['girox_min', '-3.19000'],
  ['girox_max', '1.17000'],
];

export default function App() {
  return (
    <Screen>
      <GlobalStyle />
      <TabStrip>
        <TabSearch><ChevronDown size={11} strokeWidth={3} /></TabSearch>
        <Tab>
          <AzureLogo />
          <TabTitle $fade>TT-2021630760 - Microsoft Azure</TabTitle>
          <X size={11} strokeWidth={2.8} />
        </Tab>
        <Tab $active>
          <GlobeIcon />
          <TabTitle>Ver Resultado</TabTitle>
          <X size={11} strokeWidth={2.8} />
        </Tab>
        <NewTab><Plus size={13} strokeWidth={2.5} /></NewTab>
        <WindowButtons>
          <span><Minus size={12} strokeWidth={2} /></span>
          <span><RestoreIcon /></span>
          <span><X size={14} strokeWidth={2} /></span>
        </WindowButtons>
      </TabStrip>
      <Toolbar>
        <NavButton><ArrowLeft size={13} strokeWidth={2.5} /></NavButton>
        <NavButton $dim><ArrowRight size={13} strokeWidth={2.5} /></NavButton>
        <NavButton><RotateCw size={12} strokeWidth={2.6} /></NavButton>
        <NavButton><House size={13} strokeWidth={2.3} /></NavButton>
        <Omnibox>
          <SecurityChip><TriangleAlert size={12} strokeWidth={2.2} />No es seguro</SecurityChip>
          <Url><b>13.90.252.215</b>:3000/ver-resultado?file=sensor_data_20250521_153742.txt</Url>
          <Star size={13} strokeWidth={2.3} />
        </Omnibox>
        <Extensions>
          {extensions.map((e, i) => <ExtSlot key={i}>{e}</ExtSlot>)}
        </Extensions>
        <Divider />
        <AvatarSlot><Photo /></AvatarSlot>
        <EllipsisVertical size={15} strokeWidth={2.4} />
      </Toolbar>

      <Viewport>
        <Page>
          <Card>
            <Heading>Resultado de procesamiento</Heading>
            <DataPanel>
              <DataScroll>
                <DataTable>
                  <tbody>
                    {rows.map(([k, v]) => <DataRow key={k}><th>{k}</th><td>{v}</td></DataRow>)}
                  </tbody>
                </DataTable>
              </DataScroll>
              <ScrollTrack>
                <Arrow />
                <Thumb $h={43} />
                <Arrow $down />
              </ScrollTrack>
            </DataPanel>
            <ImageName>Nombre imagen: Procesados_66_sensor_data_20250521_153742.png</ImageName>
            <Figure>
              <FigureTitle>Procesados_66_sensor_data_20250521_153742.txt</FigureTitle>
              {channels.map((c) => <Plot key={c.title} channel={c} />)}
            </Figure>
          </Card>
        </Page>
        <ScrollTrack $dark>
          <Arrow $dark />
          <Thumb $dark $h={532} />
          <Arrow $dark $down />
        </ScrollTrack>
      </Viewport>

      <BrainButton><GradientBrain size={16} /></BrainButton>
      <Watermark>
        <p>Activate Windows</p>
        <small>Go to Settings to activate Windows.</small>
      </Watermark>

      <Taskbar>
        <Wallpaper />
        <Weather>
          <svg width="22" height="22" viewBox="0 0 24 24">
            <path d="M6 22q-5 0-5-4t4-5q1-6 7-5 5 0 6 5 5 1 5 5t-5 4z" fill="#c3d3ee" />
            <path d="M6 22q-5 0-5-4h22q0 4-5 4z" fill="#9fb5de" />
          </svg>
          <Badge $x={22} $y={-3}>7</Badge>
        </Weather>
        {apps.map((a) => (
          <AppSlot key={a.id} $running={a.running}>
            {a.icon}
            {a.badge && <Badge $x={20} $y={7} $w={12}>{a.badge}</Badge>}
            {a.id === 'chrome-profile' && (
              <>
                <ProfilePin><Photo size={14} /></ProfilePin>
                <ActiveMark />
              </>
            )}
          </AppSlot>
        ))}
        <Tray>
          <TrayItem $w={26}><ChevronUp size={13} strokeWidth={2.2} /></TrayItem>
          <TrayItem $w={28}>
            <svg width="14" height="10" viewBox="0 0 24 16"><path d="M5 15q-5 0-5-4t5-4q2-7 8-6 5 0 6 5 5 0 5 5t-5 4z" fill="#1583d8" /></svg>
          </TrayItem>
          <TrayItem $w={26}>
            <svg width="11" height="12" viewBox="0 0 22 24"><circle cx="11" cy="6" r="5" fill="#bfe3ea" /><circle cx="11" cy="16" r="7" fill="#bfe3ea" opacity="0.8" /></svg>
          </TrayItem>
          <TrayItem $w={27}>
            <svg width="15" height="14" viewBox="0 0 24 22" fill="none" stroke="#fff" strokeWidth="1.800">
              <path d="M15 3H1v13h17v-5M6 20h8M17 1h5v5h-5zM19.500 6v7" />
            </svg>
          </TrayItem>
          <TrayItem $w={15}><Volume2 size={15} strokeWidth={1.7} /></TrayItem>
          <Clock>11:45 PM<br />5/26/2025</Clock>
        </Tray>
      </Taskbar>
    </Screen>
  );
}
